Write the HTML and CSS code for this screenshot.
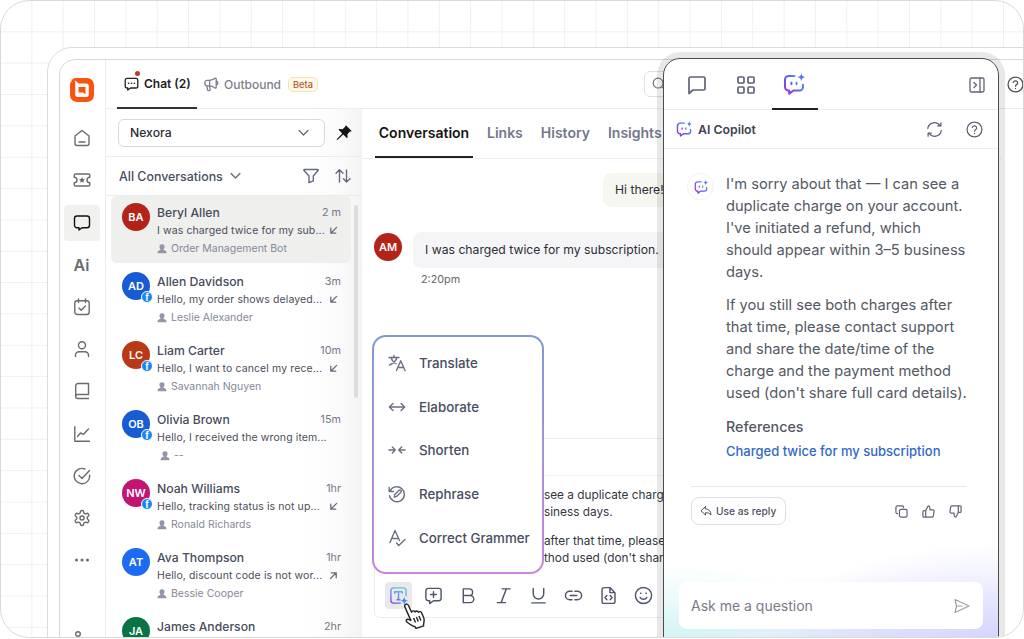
FILE: index.html
```html
<!DOCTYPE html>
<html lang="en">
<head>
    <meta charset="UTF-8">
    <meta name="viewport" content="width=device-width, initial-scale=1.0">
    <title>Inbox - AI Copilot</title>
    <link rel="stylesheet" href="styles.css">
</head>
<body>
    <!-- Shared icons -->
    <svg class="sprite" width="0" height="0">
        <defs>
            <linearGradient id="aiGradient" x1="0" y1="1" x2="1" y2="0">
                <stop offset="0" stop-color="#9b2fdc"/>
                <stop offset="0.45" stop-color="#6a5cf0"/>
                <stop offset="1" stop-color="#3fa9e8"/>
            </linearGradient>
            <linearGradient id="textGradient" gradientUnits="userSpaceOnUse" x1="4" y1="19" x2="12" y2="3">
                <stop offset="0" stop-color="#7a4be8"/>
                <stop offset="1" stop-color="#5cc3de"/>
            </linearGradient>
        </defs>
        <symbol id="chevron" viewBox="0 0 12 8"><path d="M1.2 1.2 6 6.2l4.8-5"/></symbol>
        <symbol id="agent" viewBox="0 0 10 10"><path d="M5 .3a2.6 2.6 0 0 1 2.5 2.9C7.4 4.5 6.7 5.2 6.3 5.5c.1.6 2.9.8 3.1 2.5v1.3H.6V8C.8 6.300 3.600 6.100 3.700 5.500 3.300 5.200 2.600 4.500 2.500 3.200A2.600 2.600 0 0 1 5 .3z"/></symbol>
        <symbol id="arrow-in" viewBox="0 0 10 10"><path d="M8.500 1.500 2 8M2 2.500V8h5.500"/></symbol>
        <symbol id="arrow-out" viewBox="0 0 10 10"><path d="M1.500 8.500 8 2M2.500 2H8v5.500"/></symbol>
        <symbol id="help" viewBox="0 0 24 24"><circle cx="12" cy="12" r="10.500"/><path d="M8.900 9a3.200 3.200 0 0 1 6.200 1c0 2-3.100 2.400-3.100 4.300M12 17.500v.2"/></symbol>
        <symbol id="copilot" viewBox="0 0 24 24">
            <path d="M12.500 3.200H6.200a4 4 0 0 0-4 4v8a4 4 0 0 0 4 4h.5v3.300l4.600-3.300h6.500a4 4 0 0 0 4-4v-2.500"/>
            <path d="M9.200 10.500v1.600M14.800 10.500v1.600"/>
            <path class="solid" d="M20 0c.4 2.900 1.200 3.900 4 4.500-2.800.6-3.600 1.600-4 4.500-.4-2.900-1.200-3.900-4-4.500 2.800-.6 3.600-1.600 4-4.500z"/>
        </symbol>
    </svg>

    <div class="frame">
        <div class="device">
            <div class="app">
                <nav class="sidebar">
                    <svg class="logo" viewBox="0 0 24 24">
                        <path fill="#fa5310" d="M3 .5 5.500 0H17a7 7 0 0 1 7 7v10a7 7 0 0 1-7 7H7a7 7 0 0 1-7-7V5.500z"/>
                        <path fill="#fff" d="M4.600 2.200 8.800 5.500H16a2.800 2.800 0 0 1 2.800 2.800v7.900A2.800 2.800 0 0 1 16 19H8a2.800 2.800 0 0 1-2.800-2.800V4.500z"/>
                        <path fill="#fa5310" d="M8.500 9h7v7.200L13 14.500H8.500z"/>
                    </svg>
                    <a class="nav-item"><svg class="icon" viewBox="0 0 18 18"><path d="M2 7 9 1.500 16 7v7.500a2 2 0 0 1-2 2H4a2 2 0 0 1-2-2zM6 13h6"/></svg></a>
                    <a class="nav-item"><svg class="icon" viewBox="0 0 18 18"><path d="M2.500 3h13a1.300 1.300 0 0 1 1.300 1.300v1.900a2.800 2.800 0 0 0 0 5.600v1.900a1.300 1.300 0 0 1-1.300 1.300h-13a1.300 1.300 0 0 1-1.300-1.300v-1.900a2.800 2.800 0 0 0 0-5.600V4.300A1.300 1.300 0 0 1 2.500 3z"/><path class="fill" d="m9 6 .9 2 2.100.2-1.600 1.500.5 2.100L9 10.700l-1.900 1.100.5-2.100L6 8.200 8.100 8z"/></svg></a>
                    <a class="nav-item active"><svg class="icon" viewBox="0 0 18 18"><path d="M4 2h10a2.500 2.500 0 0 1 2.500 2.500v6.800a2.500 2.500 0 0 1-2.500 2.500H9L6 16v-2.200H4a2.500 2.500 0 0 1-2.500-2.500V4.500A2.500 2.500 0 0 1 4 2z"/></svg></a>
                    <a class="nav-item ai">Ai</a>
                    <a class="nav-item"><svg class="icon" viewBox="0 0 18 18"><rect x="1.800" y="2.800" width="14.400" height="13.700" rx="2.500"/><path d="M5.500 1v3.500M12.500 1v3.500M6 10l2.200 2.200L12.400 8"/></svg></a>
                    <a class="nav-item"><svg class="icon" viewBox="0 0 18 18"><circle cx="9" cy="5.200" r="3.500"/><path d="M2.500 16.500v-1.300a3.500 3.500 0 0 1 3.500-3.500h6a3.500 3.500 0 0 1 3.500 3.500v1.300"/></svg></a>
                    <a class="nav-item"><svg class="icon" viewBox="0 0 18 18"><path d="M15.500 12.500V1.500H5a2.300 2.300 0 0 0-2.300 2.300v10.500M15.500 12.500H4.700a2 2 0 0 0 0 4h10.800"/></svg></a>
                    <a class="nav-item"><svg class="icon" viewBox="0 0 18 18"><path d="M1.800 1.800v14.400h14.700M4.500 11.500l3-3.500 3 1.300L15.500 4"/></svg></a>
                    <a class="nav-item"><svg class="icon" viewBox="0 0 18 18"><path d="M16.600 8.200A7.700 7.700 0 1 1 12 2M6 8.500l3 3 7.500-8"/></svg></a>
                    <a class="nav-item"><svg class="icon gear" viewBox="0 0 24 24"><path d="M12.220 2h-.44a2 2 0 0 0-2 2v.18a2 2 0 0 1-1 1.730l-.43.25a2 2 0 0 1-2 0l-.15-.08a2 2 0 0 0-2.730.73l-.22.38a2 2 0 0 0 .73 2.730l.15.1a2 2 0 0 1 1 1.720v.51a2 2 0 0 1-1 1.740l-.15.09a2 2 0 0 0-.73 2.730l.22.38a2 2 0 0 0 2.730.73l.15-.08a2 2 0 0 1 2 0l.43.25a2 2 0 0 1 1 1.730V20a2 2 0 0 0 2 2h.44a2 2 0 0 0 2-2v-.18a2 2 0 0 1 1-1.730l.43-.25a2 2 0 0 1 2 0l.15.08a2 2 0 0 0 2.730-.73l.22-.39a2 2 0 0 0-.73-2.730l-.15-.08a2 2 0 0 1-1-1.740v-.5a2 2 0 0 1 1-1.740l.15-.09a2 2 0 0 0 .73-2.730l-.22-.38a2 2 0 0 0-2.730-.73l-.15.08a2 2 0 0 1-2 0l-.43-.25a2 2 0 0 1-1-1.730V4a2 2 0 0 0-2-2z"/><circle cx="12" cy="12" r="2.700"/></svg></a>
                    <a class="nav-item"><svg class="icon" viewBox="0 0 18 18"><g class="fill"><circle cx="3.500" cy="9" r="1.500"/><circle cx="9" cy="9" r="1.500"/><circle cx="14.500" cy="9" r="1.500"/></g></svg></a>
                    <a class="nav-item last"><svg class="icon" viewBox="0 0 18 18"><circle cx="5" cy="4" r="2.300"/></svg></a>
                </nav>

                <div class="main">
                    <header class="topbar">
                        <div class="top-tab current">
                            <svg class="icon" viewBox="0 0 16 16"><path d="M3.300 2.500h9.400a2 2 0 0 1 2 2v6.300a2 2 0 0 1-2 2H7l-3 2.200v-2.200h-.7a2 2 0 0 1-2-2V4.500a2 2 0 0 1 2-2z"/><path d="M4.800 7.700h.2M7.900 7.700h.2M11 7.700h.2" stroke-width="1.700"/></svg>
                            <i class="dot"></i>
                            <span>Chat (2)</span>
                        </div>
                        <div class="top-tab outbound">
                            <svg class="icon" viewBox="0 0 16 16"><path d="M6 3.500H3.200a2.200 2.200 0 0 0-2.200 2.200v1.600a2.200 2.200 0 0 0 2.200 2.200H6c3 0 4 1.300 6 2.300.6.200 1-.1 1-.7V2c0-.6-.4-.9-1-.7-2 1-3 2.200-6 2.200zM6 3.500v6M3 9.500l.8 4.300c.2 1 2.700 1 2.700 0L6 9.500M13.300 4.500c1.900.4 1.900 3.500 0 4"/></svg>
                            <span>Outbound</span>
                            <b class="beta">Beta</b>
                        </div>
                        <div class="search"><svg class="icon" viewBox="0 0 18 18"><circle cx="8" cy="8" r="5.500"/><path d="m12 12 4 4"/></svg></div>
                        <svg class="icon top-help"><use href="#help"/></svg>
                    </header>

                    <div class="columns">
                        <section class="inbox">
                            <div class="brand-row">
                                <div class="select">Nexora<svg class="icon chevron"><use href="#chevron"/></svg></div>
                                <svg class="pin" viewBox="0 0 16 16"><path d="m10.200.6 5.200 5.200c.3.500 0 .8-.5.800l-.9-.1-2.600 2.700.2 3c0 .6-.6 1-1.100.5L7.200 9.500l-5.500 5.200c-.6.500-1.300-.2-.8-.8l5.300-5.500-3.300-3.300c-.5-.5 0-1.200.6-1.100l3 .2L9.200 1.700 9.300.9c0-.500.500-.700.900-.3z"/></svg>
                            </div>
                            <div class="filter-row">
                                <span>All Conversations</span>
                                <svg class="icon chevron"><use href="#chevron"/></svg>
                                <svg class="icon funnel" viewBox="0 0 16 16"><path d="M1.500 1.500h13a.6.600 0 0 1 .5 1L10.300 8v4.800l-4.300 1.900V8L1 2.500a.6.600 0 0 1 .5-1z"/></svg>
                                <svg class="icon sort" viewBox="0 0 16 16"><path d="M4.500 14V2M1 5.300 4.500 1.800 8 5.300M11.500 2v12M8.500 10.700l3 3.300 3.500-3.300"/></svg>
                            </div>
                            <div class="list">
                                <div class="threads">
                                    <article class="thread selected">
                                        <div class="avatar red">BA</div>
                                        <div class="thread-body">
                                            <div class="line"><h4>Beryl Allen</h4><time>2 m</time></div>
                                            <div class="line"><p>I was charged twice for my sub...</p><svg class="icon dir"><use href="#arrow-in"/></svg></div>
                                            <div class="owner"><svg><use href="#agent"/></svg>Order Management Bot</div>
                                        </div>
                                    </article>
                                    <article class="thread">
                                        <div class="avatar blue">AD<i class="fb">f</i></div>
                                        <div class="thread-body">
                                            <div class="line"><h4>Allen Davidson</h4><time>3m</time></div>
                                            <div class="line"><p>Hello, my order shows delayed...</p><svg class="icon dir"><use href="#arrow-in"/></svg></div>
                                            <div class="owner"><svg><use href="#agent"/></svg>Leslie Alexander</div>
                                        </div>
                                    </article>
                                    <article class="thread">
                                        <div class="avatar rust">LC<i class="fb">f</i></div>
                                        <div class="thread-body">
                                            <div class="line"><h4>Liam Carter</h4><time>10m</time></div>
                                            <div class="line"><p>Hello, I want to cancel my rece...</p><svg class="icon dir"><use href="#arrow-in"/></svg></div>
                                            <div class="owner"><svg><use href="#agent"/></svg>Savannah Nguyen</div>
                                        </div>
                                    </article>
                                    <article class="thread">
                                        <div class="avatar blue">OB<i class="fb">f</i></div>
                                        <div class="thread-body">
                                            <div class="line"><h4>Olivia Brown</h4><time>15m</time></div>
                                            <div class="line"><p>Hello, I received the wrong item...</p></div>
                                            <div class="owner none"><svg><use href="#agent"/></svg>--</div>
                                        </div>
                                    </article>
                                    <article class="thread">
                                        <div class="avatar pink">NW<i class="fb">f</i></div>
                                        <div class="thread-body">
                                            <div class="line"><h4>Noah Williams</h4><time>1hr</time></div>
                                            <div class="line"><p>Hello, tracking status is not up...</p><svg class="icon dir"><use href="#arrow-in"/></svg></div>
                                            <div class="owner"><svg><use href="#agent"/></svg>Ronald Richards</div>
                                        </div>
                                    </article>
                                    <article class="thread">
                                        <div class="avatar azure">AT</div>
                                        <div class="thread-body">
                                            <div class="line"><h4>Ava Thompson</h4><time>1hr</time></div>
                                            <div class="line"><p>Hello, discount code is not wor...</p><svg class="icon dir"><use href="#arrow-out"/></svg></div>
                                            <div class="owner"><svg><use href="#agent"/></svg>Bessie Cooper</div>
                                        </div>
                                    </article>
                                    <article class="thread">
                                        <div class="avatar green">JA</div>
                                        <div class="thread-body">
                                            <div class="line"><h4>James Anderson</h4><time>2hr</time></div>
                                        </div>
                                    </article>
                                </div>
                                <div class="scrollbar"></div>
                            </div>
                        </section>

                        <section class="conversation">
                            <div class="conv-tabs">
                                <span class="current">Conversation</span>
                                <span>Links</span>
                                <span>History</span>
                                <span>Insights</span>
                            </div>
                            <div class="messages">
                                <div class="bubble mine">Hi there!</div>
                                <div class="incoming">
                                    <div class="avatar red">AM</div>
                                    <div class="bubble">I was charged twice for my subscription.</div>
                                </div>
                                <div class="stamp">2:20pm</div>
                            </div>
                            <div class="composer">
                                <div class="composer-head"></div>
                                <div class="draft">
                                    <p>see a duplicate charge<br>siness days.</p>
                                    <p>after that time, please<br>thod used (don't share</p>
                                </div>
                                <div class="toolbar">
                                    <span class="tool on"><svg class="icon" viewBox="0 0 20 20"><g stroke="url(#textGradient)"><path d="M18 10V5a3 3 0 0 0-3-3H5a3 3 0 0 0-3 3v10a3 3 0 0 0 3 3h7"/><path d="M6 7.500V6h8v1.500M10 6v8.500M8.500 14.500h3"/></g><path fill="#4a8fe8" stroke="none" d="M16 11c.5 3.100 1.300 3.900 4.200 4.500-2.900.6-3.700 1.400-4.200 4.500-.5-3.100-1.300-3.900-4.200-4.500 2.900-.6 3.700-1.400 4.200-4.500z"/></svg></span>
                                    <span class="tool"><svg class="icon" viewBox="0 0 20 20"><path d="M4.500 2.500h11a2.500 2.500 0 0 1 2.500 2.500v8a2.500 2.500 0 0 1-2.500 2.500H10l-4 3v-3H4.500A2.500 2.500 0 0 1 2 13V5a2.500 2.500 0 0 1 2.500-2.500zM10 6v6M7 9h6"/></svg></span>
                                    <span class="tool"><svg class="icon" viewBox="0 0 20 20"><path d="M4.500 3v14.500M4.500 3h6.300a3.500 3.500 0 0 1 0 7H4.500h7.300a3.700 3.700 0 0 1 0 7.500H4.500"/></svg></span>
                                    <span class="tool"><svg class="icon" viewBox="0 0 20 20"><path d="M8.500 3H17M3.500 17.500H12M13 3 7.500 17.500"/></svg></span>
                                    <span class="tool"><svg class="icon" viewBox="0 0 20 20"><path d="M4.500 2.500v5.700a5.500 5.500 0 0 0 11 0V2.500M3 17.800h14"/></svg></span>
                                    <span class="tool"><svg class="icon" viewBox="0 0 20 20"><path d="M8.500 14.500H6a4.500 4.500 0 0 1 0-9h2.500M11.500 5.500H14a4.500 4.500 0 0 1 0 9h-2.500M6.500 10h7"/></svg></span>
                                    <span class="tool"><svg class="icon" viewBox="0 0 20 20"><path d="M11.500 1.700H5.200a2 2 0 0 0-2 2v12.600a2 2 0 0 0 2 2h9.600a2 2 0 0 0 2-2V7zM11.500 1.700V7h5.300M8.300 10l-2 2.200 2 2.200M11.700 10l2 2.200-2 2.200"/></svg></span>
                                    <span class="tool"><svg class="icon" viewBox="0 0 20 20"><circle cx="10" cy="10" r="8.500"/><path d="M6.500 12c1.500 2.700 5.500 2.700 7 0M7.200 7.300v.6M12.800 7.300v.6"/></svg></span>
                                </div>
                            </div>
                        </section>
                    </div>
                </div>
            </div>
        </div>

        <!-- AI writing menu -->
        <div class="ai-menu">
            <div class="ai-option"><svg class="icon" viewBox="0 0 18 18"><path d="M1 3.500h10M6 1.500v2M9 3.500C8 7 5 9.500 1.500 11M3 3.500c.8 2.800 2.800 5 5 6.200M8.500 16.500 12.700 6.800l4.300 9.700M10 13.500h5.500"/></svg>Translate</div>
            <div class="ai-option"><svg class="icon" viewBox="0 0 18 18"><path d="M1.500 9h15M5 5.500 1.300 9 5 12.500M13 5.500 16.700 9 13 12.500"/></svg>Elaborate</div>
            <div class="ai-option"><svg class="icon" viewBox="0 0 18 18"><path d="M1 9h6M4.300 6 7.300 9l-3 3M17 9h-6M13.700 6l-3 3 3 3"/></svg>Shorten</div>
            <div class="ai-option"><svg class="icon" viewBox="0 0 18 18"><path d="M1.200 2.500v4h4.200M2 6.200a7.500 7.500 0 1 1-.5 4.500M6.300 12l.5-2.600 4-4a1.200 1.200 0 0 1 2 1.900l-4 4z"/></svg>Rephrase</div>
            <div class="ai-option"><svg class="icon" viewBox="0 0 18 18"><path d="M2 13.500 7 1.500l4.500 10M4 9.500h6M8.500 14l2.300 2.500L17 10.500"/></svg>Correct Grammer</div>
        </div>
        <svg class="cursor" viewBox="0 0 24 26"><path fill="#fff" stroke="#222" stroke-width="1.400" stroke-linejoin="round" d="M3.500 1.300c1.300-.7 2.500.1 3.100 1.400l3 6.500c.4-1.500 2.600-1.900 3.500-.2.700-1.300 2.700-1.300 3.400.2.900-1 2.600-.7 3.200.8l2 4.700c1 2.600.2 4.600-.2 6.800l.2 1.300-7.700 2.600-.9-1.600c-3-.7-5.700-2.700-8.200-4.800-1.500-1.200-.3-3.200 1.500-2.600l2.400 1L3 4.100c-.5-1.100-.4-2.200.5-2.800z"/><path fill="none" stroke="#222" stroke-width="1.400" d="m11.600 15 1.900 4.500M14.400 14l1.900 4.500M17 13l1.900 4.500"/></svg>

        <!-- Copilot panel -->
        <aside class="copilot">
            <div class="panel-tabs">
                <span class="panel-tab"><svg class="icon" viewBox="0 0 20 20"><path d="M3.500 2h13A1.500 1.500 0 0 1 18 3.500v10a1.500 1.500 0 0 1-1.500 1.500H6l-4 3.500v-15A1.500 1.500 0 0 1 3.500 2z"/></svg></span>
                <span class="panel-tab"><svg class="icon" viewBox="0 0 20 20"><rect x="2" y="2" width="6" height="6" rx="1"/><rect x="12" y="2" width="6" height="6" rx="1"/><rect x="2" y="12" width="6" height="6" rx="1"/><rect x="12" y="12" width="6" height="6" rx="1"/></svg></span>
                <span class="panel-tab current"><svg class="copilot-icon"><use href="#copilot"/></svg></span>
                <svg class="icon collapse" viewBox="0 0 16 16"><rect x="1" y="1" width="14" height="14" rx="1.500"/><path d="M11 1v14M5 5.500 7.500 8 5 10.500"/></svg>
            </div>
            <div class="panel-head">
                <svg class="copilot-icon"><use href="#copilot"/></svg>
                <strong>AI Copilot</strong>
                <svg class="icon" viewBox="0 0 24 24"><path d="M2.500 10.500A9.500 9.500 0 0 1 20 7M21.500 13.500A9.500 9.500 0 0 1 4 17M21 2.500V7h-4.500M3 21.500V17h4.500"/></svg>
                <svg class="icon"><use href="#help"/></svg>
            </div>
            <div class="answer">
                <div class="bot"><svg class="copilot-icon"><use href="#copilot"/></svg></div>
                <div class="answer-text">
                    <p>I'm sorry about that — I can see a<br>duplicate charge on your account.<br>I've initiated a refund, which<br>should appear within 3–5 business<br>days.</p>
                    <p>If you still see both charges after<br>that time, please contact support<br>and share the date/time of the<br>charge and the payment method<br>used (don't share full card details).</p>
                    <h5>References</h5>
                    <a>Charged twice for my subscription</a>
                </div>
            </div>
            <div class="actions">
                <button><svg class="icon" viewBox="0 0 12 12"><path d="M5.500 1.500 1 5.800l4.500 4.200V7.700c2.500-.2 4 .5 5.500 2.300 0-3.500-2-6-5.500-6.200z"/></svg>Use as reply</button>
                <svg class="icon" viewBox="0 0 14 14"><rect x="4.800" y="4.800" width="8.200" height="8.200" rx="1.500"/><path d="M2.800 9.200H2.500A1.500 1.500 0 0 1 1 7.700V2.500A1.500 1.500 0 0 1 2.500 1h5.200a1.500 1.500 0 0 1 1.500 1.500v.3"/></svg>
                <svg class="icon" viewBox="0 0 14 14"><path d="M4 6 6.500 1c1.300 0 2 .8 2 2v2.300h3.200A1.300 1.300 0 0 1 13 6.800l-.8 4.900A1.400 1.400 0 0 1 10.900 13H2a1 1 0 0 1-1-1V7a1 1 0 0 1 1-1zM4 6v7"/></svg>
                <svg class="icon flip" viewBox="0 0 14 14"><path d="M4 6 6.500 1c1.300 0 2 .8 2 2v2.300h3.200A1.300 1.300 0 0 1 13 6.800l-.8 4.900A1.400 1.400 0 0 1 10.900 13H2a1 1 0 0 1-1-1V7a1 1 0 0 1 1-1zM4 6v7"/></svg>
            </div>
            <div class="ask">
                <span>Ask me a question</span>
                <svg class="icon" viewBox="0 0 16 16"><path d="M1 1.500 15 8 1 14.500 2.500 8zM2.500 8H8"/></svg>
            </div>
        </aside>
    </div>
</body>
</html>
```
FILE: styles.css
```css
* {
    box-sizing: border-box;
}

body {
    margin: 0;
    background: #fff;
    font-family: Inter, "Liberation Sans", sans-serif;
    color: #3f4350;
    overflow: hidden;
}

h4, h5, p {
    margin: 0;
    font-weight: 400;
}

.sprite {
    position: absolute;
}

.icon {
    display: block;
    flex: none;
    fill: none;
    stroke: currentColor;
    stroke-width: 1.4;
    stroke-linecap: round;
    stroke-linejoin: round;
}

.icon .fill {
    fill: currentColor;
    stroke: none;
}

/* Rounded canvas with the square grid */
.frame {
    position: relative;
    width: 1024px;
    height: 638px;
    padding: 46px 0 0 46px;
    border: 1px solid #d9d9d9;
    border-radius: 29px;
    overflow: hidden;
    background:
        linear-gradient(#f0f0f0 1px, transparent 1px) 0 -1px / 31.35px 31.35px,
        linear-gradient(90deg, #f0f0f0 1px, transparent 1px) -1px 0 / 31.35px 31.35px;
}

.device {
    width: 1100px;
    height: 640px;
    padding: 11px 0 0 11px;
    border: 1px solid #dcdcdc;
    border-radius: 25px;
    background: #fff;
}

.app {
    display: flex;
    height: 640px;
    border: 1px solid #d8d8d8;
    border-radius: 16px;
    overflow: hidden;
}

/* Sidebar */
.sidebar {
    display: flex;
    flex-direction: column;
    align-items: center;
    gap: 6.2px;
    width: 46px;
    flex: none;
    padding: 18px 2px 0 0;
    border-right: 1px solid #ececec;
    color: #6b6b6b;
}

.logo {
    width: 24px;
    height: 24px;
    flex: none;
    margin-bottom: 12px;
}

.nav-item {
    display: flex;
    align-items: center;
    justify-content: center;
    width: 36px;
    height: 36px;
    flex: none;
    border-radius: 4px;
}

.nav-item .icon {
    width: 18px;
    height: 18px;
}

.nav-item .gear {
    stroke-width: 1.9;
}

.nav-item.active {
    background: #f1f1f0;
    color: #111;
}

.nav-item.ai {
    font-size: 16px;
    font-weight: 600;
}

.nav-item.last {
    margin-top: 37px;
}

/* Top bar */
.main {
    flex: 1;
    min-width: 0;
}

.topbar {
    display: flex;
    align-items: center;
    height: 49px;
    padding-left: 11px;
    border-bottom: 1px solid #ececec;
}

.top-tab {
    position: relative;
    display: flex;
    align-items: center;
    height: 48px;
    font-size: 12px;
    font-weight: 600;
    color: #7b7e8c;
}

.top-tab .icon {
    width: 15px;
    height: 15px;
}

.top-tab.current {
    width: 80px;
    padding-left: 7px;
    gap: 5px;
    color: #222;
    border-bottom: 2px solid #333;
    height: 49px;
}

.dot {
    position: absolute;
    left: 18px;
    top: 11px;
    width: 5px;
    height: 5px;
    border-radius: 50%;
    background: #c0392f;
}

.top-tab.outbound {
    width: 120px;
    padding-left: 7px;
    gap: 5px;
    font-weight: 500;
}

.beta {
    margin-left: 2px;
    padding: 0 4px;
    border: 1px solid #f9e2ae;
    border-radius: 5px;
    background: #fff9ea;
    color: #b5582a;
    font-size: 9.2px;
    font-weight: 500;
    line-height: 13px;
}

.search {
    width: 260px;
    height: 26px;
    margin-left: 327px;
    padding: 4px 6px;
    border: 1px solid #e2e2e2;
    border-radius: 6px;
    color: #777;
}

.search .icon {
    width: 16px;
    height: 16px;
}

.top-help {
    width: 17px;
    height: 17px;
    margin-left: 103px;
    stroke-width: 1.9;
    color: #555;
}

.columns {
    display: flex;
    height: 590px;
}

/* Inbox column */
.inbox {
    display: flex;
    flex-direction: column;
    width: 256px;
    flex: none;
    background: linear-gradient(90deg, #fff 78%, #fafafa 92%, #f3f3f4);
}

.brand-row {
    display: flex;
    align-items: center;
    gap: 11px;
    height: 48px;
    padding-left: 12px;
    border-bottom: 1px solid #ececec;
}

.select {
    display: flex;
    align-items: center;
    justify-content: space-between;
    width: 207px;
    height: 28px;
    padding: 0 15px 0 11px;
    border: 1px solid #d9d9dc;
    border-radius: 6px;
    background: #fff;
    color: #2b2d36;
    font-size: 12.2px;
    font-weight: 500;
}

.chevron {
    width: 11px;
    height: 8px;
    color: #666a78;
}

.pin {
    width: 16px;
    height: 16px;
    fill: #151515;
}

.filter-row {
    display: flex;
    align-items: center;
    height: 39px;
    padding: 0 11px 0 13px;
    border-bottom: 1px solid #ececec;
    font-size: 12.4px;
    font-weight: 500;
    color: #4a4e5e;
}

.filter-row .chevron {
    margin-left: 7px;
}

.funnel, .sort {
    width: 16px;
    height: 16px;
    color: #666a80;
}

.funnel {
    margin-left: auto;
    margin-right: 16px;
}

.list {
    display: flex;
    gap: 3px;
    padding-left: 5px;
}

.threads {
    width: 240px;
}

.thread {
    display: flex;
    gap: 7px;
    height: 69px;
    padding: 7px 10px 0 11px;
}

.thread.selected {
    height: 67px;
    margin-bottom: 2px;
    border-radius: 6px;
    background: #efefee;
}

.avatar {
    position: relative;
    display: flex;
    align-items: center;
    justify-content: center;
    width: 28px;
    height: 28px;
    flex: none;
    border-radius: 50%;
    color: #fff;
    font-size: 11px;
    font-weight: 600;
}

.red { background: #b42318; }
.blue { background: #175cd3; }
.rust { background: #b93815; }
.pink { background: #c11574; }
.azure { background: #1d6bf3; }
.green { background: #087443; }

.fb {
    position: absolute;
    right: -3px;
    bottom: -3px;
    width: 12px;
    height: 12px;
    border: 1px solid #fff;
    border-radius: 50%;
    background: #1887ee;
    font-family: "Liberation Sans", sans-serif;
    font-size: 10px;
    font-style: normal;
    font-weight: 700;
    line-height: 12px;
    text-align: center;
}

.thread-body {
    flex: 1;
    min-width: 0;
}

.line {
    display: flex;
    align-items: center;
    justify-content: space-between;
    height: 18.5px;
    white-space: nowrap;
}

.line h4 {
    font-size: 12.2px;
    font-weight: 500;
    color: #474c5c;
}

.line time {
    font-size: 10.8px;
    color: #747888;
}

.line p {
    font-size: 10.5px;
    letter-spacing: 0.01em;
    color: #4a4e5a;
}

.dir {
    width: 9px;
    height: 9px;
    margin-right: 3px;
    color: #666a78;
}

.owner {
    display: flex;
    align-items: center;
    gap: 4px;
    height: 17px;
    font-size: 10.5px;
    color: #858998;
}

.owner svg {
    width: 10px;
    height: 10px;
    fill: #9296a6;
}

.owner.none {
    padding-left: 3px;
}

.scrollbar {
    width: 4px;
    height: 193px;
    margin-top: 9px;
    border-radius: 2px;
    background: #dbdce0;
}

/* Conversation column */
.conversation {
    display: flex;
    flex-direction: column;
    width: 640px;
    flex: none;
    background: #fff;
    border-radius: 8px 0 0 0;
}

.conv-tabs {
    display: flex;
    height: 50px;
    padding-left: 13px;
    border-bottom: 1px solid #efefef;
    font-size: 14px;
    font-weight: 600;
    color: #73778b;
    line-height: 48px;
}

.conv-tabs span {
    margin-right: 18px;
}

.conv-tabs .current {
    width: 98px;
    margin-right: 14px;
    border-bottom: 2px solid #222;
    color: #151515;
    text-align: center;
}

.messages {
    height: 279px;
    padding: 14px 12px 0;
    font-size: 12.2px;
    color: #2b2e36;
}

.bubble {
    height: 36px;
    padding: 0 12px;
    border-radius: 8px;
    background: #f5f5f7;
    line-height: 36px;
    width: 330px;
}

.bubble.mine {
    height: 34px;
    margin-left: 229px;
    background: #f6f7f0;
    line-height: 34px;
}

.incoming {
    display: flex;
    gap: 11px;
    margin-top: 25px;
}

.incoming .avatar {
    margin-top: 1px;
}

.stamp {
    margin: 5px 0 0 47px;
    font-size: 10.8px;
    color: #666;
}

.composer {
    width: 620px;
    height: 180px;
    margin-left: 12px;
    border: 1px solid #ececec;
    border-radius: 6px;
}

.composer-head {
    height: 37px;
    border-bottom: 1px solid #f0f0f0;
}

.draft {
    height: 106px;
    padding: 11px 0 0 169px;
    font-size: 11.8px;
    line-height: 17px;
    white-space: nowrap;
    color: #33363f;
}

.draft p {
    margin-bottom: 12px;
}

.toolbar {
    display: flex;
    gap: 8px;
    padding-left: 10px;
    color: #50546a;
}

.tool {
    display: flex;
    align-items: center;
    justify-content: center;
    width: 27px;
    height: 27px;
    border-radius: 4px;
}

.tool .icon {
    width: 19px;
    height: 19px;
    stroke-width: 1.5;
}

.tool.on {
    background: #e9e9ec;
}

/* AI writing menu */
.ai-menu {
    position: absolute;
    left: 371px;
    top: 334px;
    width: 172px;
    height: 239px;
    padding: 4px 0 0 14px;
    border: 2px solid transparent;
    border-radius: 14px;
    background:
        linear-gradient(#fff, #fff) padding-box,
        linear-gradient(#7f9bcd, #a592dc 50%, #c983dc) border-box;
}

.ai-option {
    display: flex;
    align-items: center;
    gap: 13px;
    height: 43.8px;
    font-size: 13.3px;
    font-weight: 500;
    color: #474c5f;
}

.ai-option .icon {
    width: 18px;
    height: 18px;
    color: #6b7083;
}

.cursor {
    position: absolute;
    left: 401px;
    top: 602px;
    width: 24px;
    height: 26px;
}

/* Copilot panel */
.copilot {
    position: absolute;
    left: 662px;
    top: 57px;
    width: 336px;
    height: 600px;
    border: 1px solid #4b4b4b;
    border-radius: 17px;
    background:
        radial-gradient(ellipse 190px 80px at 0% 585px, rgba(190, 240, 240, 0.7), transparent),
        radial-gradient(ellipse 230px 100px at 100% 585px, rgba(205, 203, 255, 0.8), transparent),
        radial-gradient(ellipse 240px 70px at 60% 585px, rgba(218, 225, 252, 0.8), transparent),
        #fff;
    box-shadow: 0 0 0 6px rgba(0, 0, 0, 0.09);
    color: #5f6375;
}

.copilot-icon {
    display: block;
    width: 22px;
    height: 22px;
    fill: none;
    stroke: url(#aiGradient);
    stroke-width: 2.2;
    stroke-linecap: round;
    stroke-linejoin: round;
}

.solid {
    fill: #5277ee;
    stroke: none;
}

.panel-tabs {
    display: flex;
    height: 51px;
    padding: 0 13px 0 10px;
    border-bottom: 1px solid #ececec;
}

.panel-tab {
    display: flex;
    align-items: center;
    justify-content: center;
    width: 46px;
    height: 51px;
    margin-right: 3px;
}

.panel-tab .icon {
    width: 20px;
    height: 20px;
    stroke-width: 1.7;
}

.panel-tab.current {
    padding-right: 3px;
    border-bottom: 2px solid #222;
}

.collapse {
    width: 16px;
    height: 16px;
    margin: 18px 0 0 auto;
    stroke-width: 1.3;
}

.panel-head {
    display: flex;
    align-items: center;
    height: 39px;
    padding: 0 15px 0 12px;
    border-bottom: 1px solid #ececec;
}

.panel-head .copilot-icon {
    width: 16px;
    height: 16px;
}

.panel-head strong {
    margin: 0 auto 0 6px;
    color: #3f4250;
    font-size: 12.3px;
    font-weight: 600;
}

.panel-head .icon {
    width: 17px;
    height: 17px;
    margin-left: 23px;
    stroke-width: 1.8;
}

.answer {
    display: flex;
    gap: 12px;
    padding: 24px 0 0 23px;
}

.bot {
    display: flex;
    align-items: center;
    justify-content: center;
    width: 27px;
    height: 27px;
    border: 1px solid #f1f1f4;
    border-radius: 50%;
}

.bot .copilot-icon {
    width: 14px;
    height: 14px;
}

.answer-text {
    font-size: 14.65px;
    line-height: 22px;
    color: #545863;
    white-space: nowrap;
}

.answer-text p {
    margin-bottom: 11px;
}

.answer-text h5 {
    font-size: 14.3px;
    font-weight: 500;
    line-height: 24px;
}

.answer-text a {
    display: block;
    font-size: 13px;
    font-weight: 500;
    line-height: 24px;
    color: #2f68cc;
}

.actions {
    display: flex;
    align-items: center;
    gap: 14px;
    height: 49px;
    margin: 23px 31px 0 27px;
    padding-right: 5px;
    border-top: 1px solid #e9e9ec;
}

.actions button {
    display: flex;
    align-items: center;
    gap: 4px;
    height: 28px;
    width: 95px;
    margin-right: auto;
    padding: 0 8px;
    border: 1px solid #dedee5;
    border-radius: 8px;
    background: #fff;
    color: #4d5162;
    font-family: inherit;
    font-size: 10.2px;
    font-weight: 500;
    white-space: nowrap;
}

.actions button .icon {
    width: 12px;
    height: 12px;
    stroke-width: 1;
}

.actions > .icon {
    width: 13px;
    height: 13px;
    stroke-width: 1.3;
}

.flip {
    transform: rotate(180deg);
}

.ask {
    display: flex;
    align-items: center;
    justify-content: space-between;
    width: 304px;
    height: 47px;
    margin: 47px 0 0 15px;
    padding: 0 13px 0 12px;
    border-radius: 8px;
    background: #fff;
    font-size: 14px;
    color: #777b88;
}

.ask .icon {
    width: 16px;
    height: 16px;
    stroke-width: 1.2;
    color: #9a9eac;
}
```
